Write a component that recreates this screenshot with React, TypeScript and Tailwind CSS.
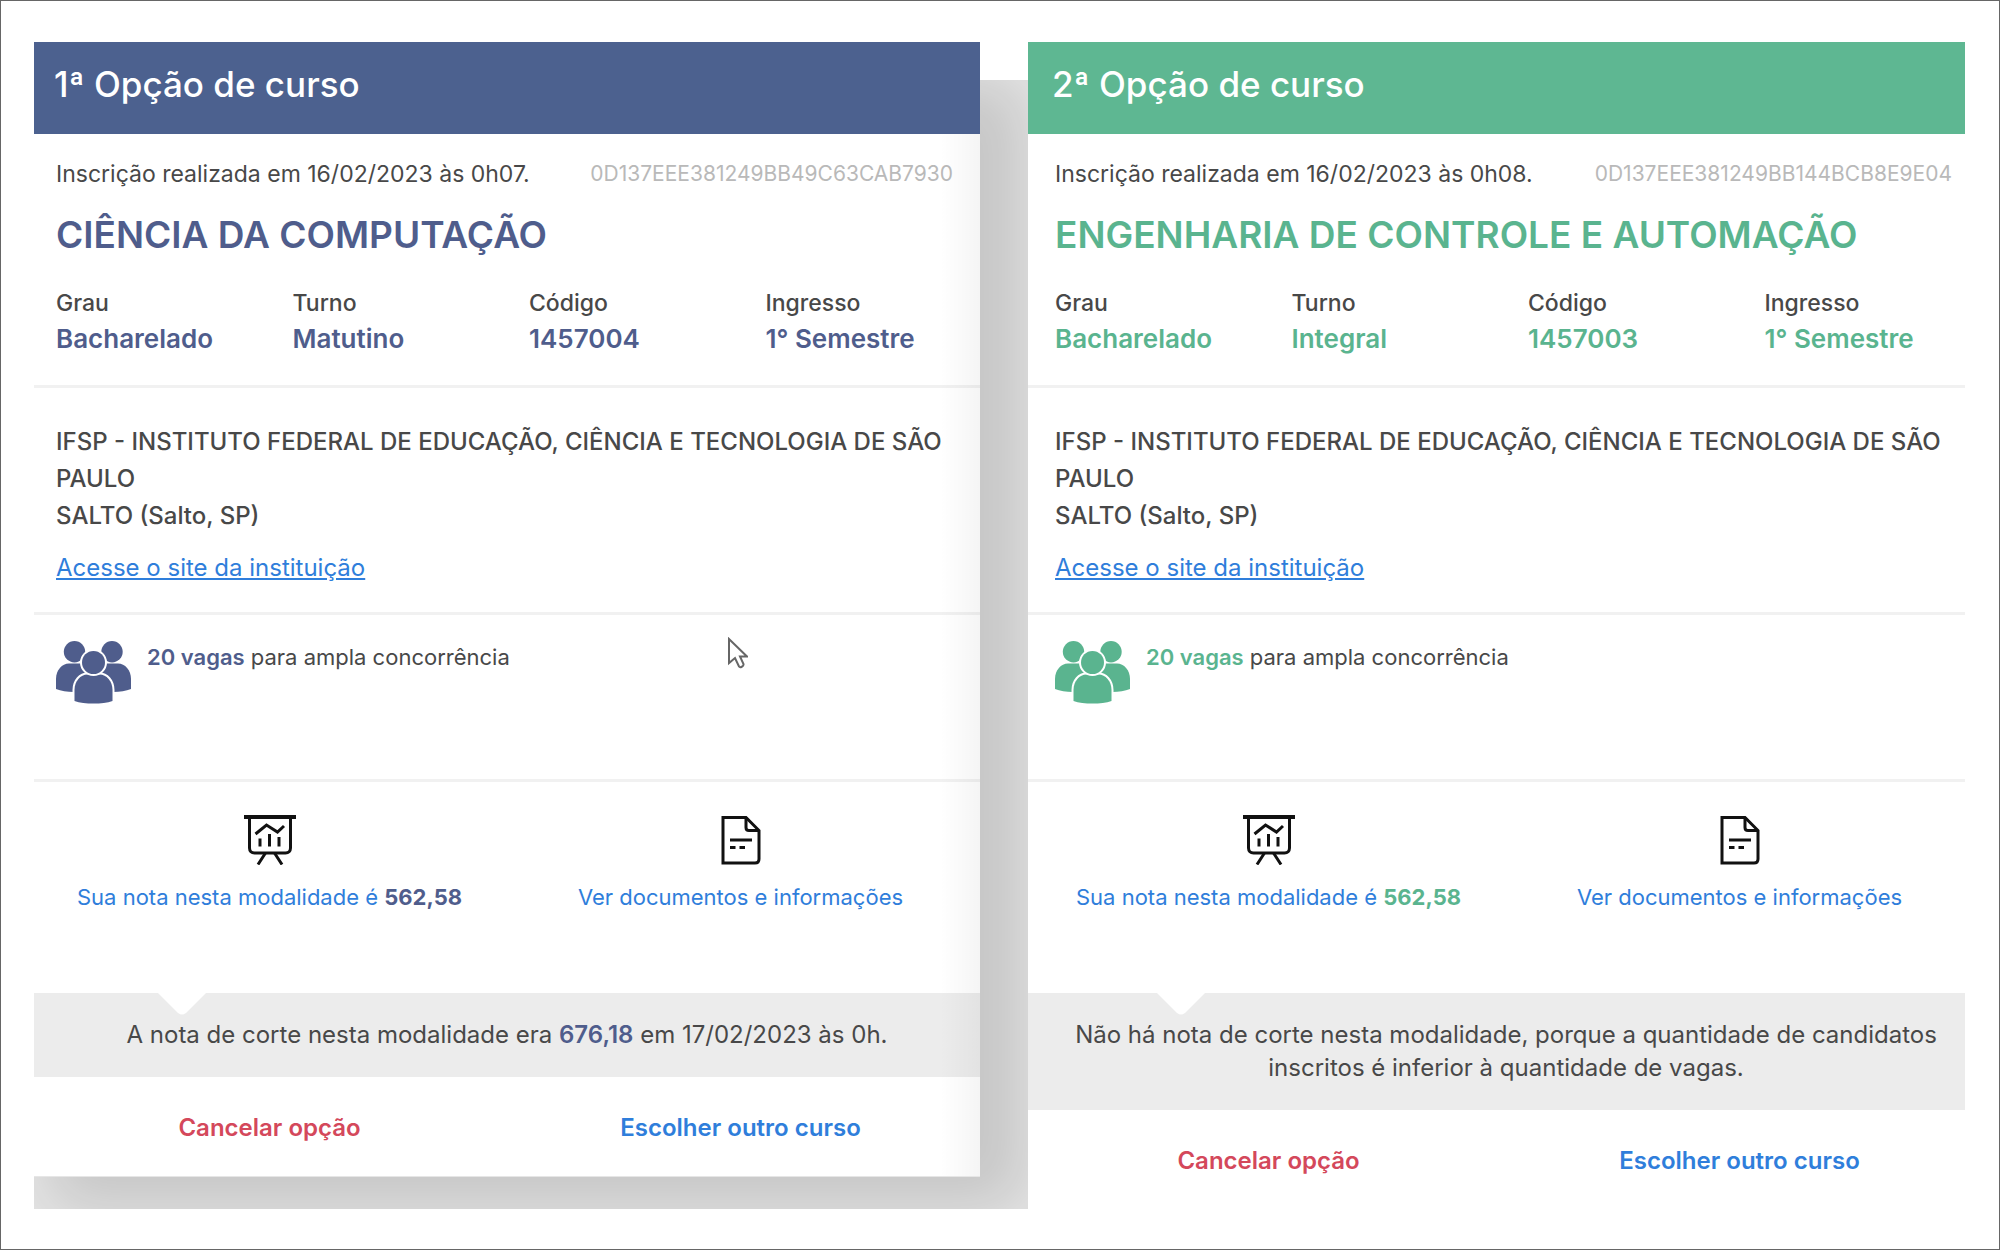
import clsx from 'clsx';

type Theme = 'blue' | 'green';

interface Course {
  theme: Theme;
  heading: string;
  registered: string;
  hash: string;
  title: string;
  details: { label: string; value: string }[];
  score: string;
  cutoff: React.ReactNode;
}

const textColor: Record<Theme, string> = {
  blue: 'text-[#4f5d8c]',
  green: 'text-[#5ab48f]',
};

const courses: Course[] = [
  {
    theme: 'blue',
    heading: '1ª Opção de curso',
    registered: 'Inscrição realizada em 16/02/2023 às 0h07.',
    hash: '0D137EEE381249BB49C63CAB7930',
    title: 'CIÊNCIA DA COMPUTAÇÃO',
    details: [
      { label: 'Grau', value: 'Bacharelado' },
      { label: 'Turno', value: 'Matutino' },
      { label: 'Código', value: '1457004' },
      { label: 'Ingresso', value: '1° Semestre' },
    ],
    score: '562,58',
    cutoff: (
      <>
        A nota de corte nesta modalidade era <strong className="font-semibold text-[#4f5d8c]">676,18</strong> em
        17/02/2023 às 0h.
      </>
    ),
  },
  {
    theme: 'green',
    heading: '2ª Opção de curso',
    registered: 'Inscrição realizada em 16/02/2023 às 0h08.',
    hash: '0D137EEE381249BB144BCB8E9E04',
    title: 'ENGENHARIA DE CONTROLE E AUTOMAÇÃO',
    details: [
      { label: 'Grau', value: 'Bacharelado' },
      { label: 'Turno', value: 'Integral' },
      { label: 'Código', value: '1457003' },
      { label: 'Ingresso', value: '1° Semestre' },
    ],
    score: '562,58',
    cutoff: 'Não há nota de corte nesta modalidade, porque a quantidade de candidatos inscritos é inferior à quantidade de vagas.',
  },
];

const PeopleIcon = () => (
  <svg width="75" height="63" viewBox="0 0 75 63" fill="currentColor" className="shrink-0">
    <circle cx="18.5" cy="10.7" r="10.7" />
    <circle cx="56" cy="10.7" r="10.7" />
    <path d="M0 48V38c0-9 6-15.500 13-15.500h12c6 0 10 4 12 10v18.500H18C11 51 5 50 0 48Z" />
    <path d="M75 48V38c0-9-6-15.500-13-15.500H50c-6 0-10 4-12 10v18.500h19c7 0 13-1 18-3Z" />
    <g stroke="#fff" strokeWidth="4" paintOrder="stroke">
      <path d="M18.500 60V49c0-9 6-15.500 13-15.500h12c7 0 13 6.500 13 15.500v11c-5 2-12 2.500-19 2.500s-14-.500-19-2.500Z" />
      <circle cx="37.500" cy="21.500" r="11.500" />
    </g>
  </svg>
);

const ChartIcon = () => (
  <svg width="52" height="50" viewBox="0 0 52 50" fill="none" stroke="#111" strokeWidth="3">
    <path d="M0 2h52" strokeWidth="4" />
    <path d="M5.500 3v30c0 3 2 5 5 5h31c3 0 5-2 5-5V3" />
    <path d="m11.500 19 11-9 11 7 6.500-6" />
    <path d="M16 23.500v8M25.500 19v12.500M35 22v9.500" />
    <path d="m21.500 38-7.500 11.500M30.500 38 38 49.500" />
  </svg>
);

const DocumentIcon = () => (
  <svg width="40" height="50" viewBox="0 0 40 50" fill="none" stroke="#111" strokeWidth="3">
    <path d="M2 2.500h23L38 15.500V44c0 2.500-1.500 4-4 4H2Z" />
    <path d="M25 2.500v10c0 2 1 3 3 3h10" />
    <path d="M9 25h22M9 32.500h5.500M18.500 32.500H24" />
  </svg>
);

const Cursor = () => (
  <svg
    width="20"
    height="32"
    viewBox="0 0 20 32"
    fill="#fff"
    stroke="#666"
    strokeWidth="2"
    className="absolute top-[22px] left-[694px]"
  >
    <path d="M1 2v24l6-5 4 8.500c1 1.500 5 0 4.500-2.500L12 19.500h7Z" />
  </svg>
);

const CourseCard = ({ course }: { course: Course }) => {
  const isBlue = course.theme === 'blue';
  const accent = textColor[course.theme];
  // The second card is scrolled slightly sideways inside its frame
  const inset = !isBlue && 'ml-[5px] -mr-[14px]';

  return (
    <article className="relative overflow-hidden bg-white text-[22px] leading-8 text-[#484848]">
      <header className={clsx('h-[92px] pt-5', isBlue ? 'bg-[#4c618f] pl-5' : 'bg-[#5eb792] pl-6')}>
        <h2 className="text-[35px] leading-[44px] font-medium text-white">{course.heading}</h2>
      </header>

      {/* Course */}
      <section className="border-b-[3px] border-[#f1f1f1] pt-6 pb-7">
        <div className={clsx(inset)}>
          <div className="flex justify-between pr-[27px] pl-[22px] whitespace-nowrap">
            <p className="text-[23px]">{course.registered}</p>
            <p className="text-[21px] text-[#b9b9b9]">{course.hash}</p>
          </div>
          <h3 className={clsx('mt-[23px] pl-[22px] text-[37px] leading-[44px] font-semibold whitespace-nowrap', accent)}>
            {course.title}
          </h3>
          <dl className="mt-7 grid grid-cols-4 leading-9">
            {course.details.map((item) => (
              <div key={item.label} className="pl-[22px]">
                <dt className="text-[23px] font-medium">{item.label}</dt>
                <dd className={clsx('text-[26px] font-semibold', accent)}>{item.value}</dd>
              </div>
            ))}
          </dl>
        </div>
      </section>

      {/* Institution */}
      <section className="border-b-[3px] border-[#f1f1f1] pt-[35px] pb-7 text-[24px]">
        <div className={clsx('px-[22px]', inset)}>
          <p className="leading-[37px] font-medium">
            IFSP - INSTITUTO FEDERAL DE EDUCAÇÃO, CIÊNCIA E TECNOLOGIA DE SÃO PAULO
            <br />
            SALTO (Salto, SP)
          </p>
          <a href="#instituicao" className="mt-[18px] inline-block text-[#2f7edb] underline">
            Acesse o site da instituição
          </a>
        </div>
      </section>

      {/* Seats */}
      <section className="relative border-b-[3px] border-[#f1f1f1] pt-[26px] pb-[75px]">
        <div className={clsx('flex gap-4 pl-[22px]', accent, inset)}>
          <PeopleIcon />
          <p className="text-[#484848]">
            <strong className={clsx('font-semibold', accent)}>20 vagas</strong> para ampla concorrência
          </p>
        </div>
        {isBlue && <Cursor />}
      </section>

      {/* Score and documents */}
      <section className="pt-[33px] pb-20">
        <div className={clsx('grid grid-cols-2 pr-1 text-[#2f7edb]', inset)}>
          <a href="#nota" className="flex flex-col items-center gap-4">
            <ChartIcon />
            <span>
              Sua nota nesta modalidade é <strong className={clsx('font-bold', accent)}>{course.score}</strong>
            </span>
          </a>
          <a href="#documentos" className="flex flex-col items-center gap-4">
            <DocumentIcon />
            <span>Ver documentos e informações</span>
          </a>
        </div>
      </section>

      {/* Cutoff score */}
      <section className="bg-[#ececec] pt-[25px] pb-[26px] text-[24px]">
        <div className={clsx('relative px-8 text-center leading-[33px]', inset)}>
          <svg width="48" height="22" viewBox="0 0 48 22" fill="#fff" className="absolute -top-[25px] left-[124px]">
            <path d="M0 0h48L28 20q-4 3-8 0Z" />
          </svg>
          <p>{course.cutoff}</p>
        </div>
      </section>

      <footer className="pt-[35px] pb-8 text-[24px]">
        <div className={clsx('grid grid-cols-2 justify-items-center pr-1 font-semibold', inset)}>
          <button type="button" className="text-[#d4485b]">Cancelar opção</button>
          <button type="button" className="text-[#2f7edb]">Escolher outro curso</button>
        </div>
      </footer>

      {isBlue && (
        <div className="pointer-events-none absolute top-[92px] right-0 bottom-0 w-10 bg-linear-to-r from-transparent to-black/4" />
      )}
    </article>
  );
};

const App = () => {
  return (
    <main className="min-h-screen border border-[#666] bg-white pt-[41px] pr-[34px] pb-10 pl-[33px] font-['Inter',sans-serif]">
      <div className="relative grid grid-cols-[946fr_937fr] items-start gap-12">
        {/* Grey backdrop showing between and below the cards */}
        <div className="absolute top-[38px] right-0 bottom-0 left-0 overflow-hidden bg-[#e6e6e6]">
          <div className="mr-[985px] h-[calc(100%-32px)] shadow-[30px_16px_60px_16px_rgba(0,0,0,0.14)]" />
        </div>
        {courses.map((course) => (
          <CourseCard key={course.theme} course={course} />
        ))}
      </div>
    </main>
  );
};

export default App;
